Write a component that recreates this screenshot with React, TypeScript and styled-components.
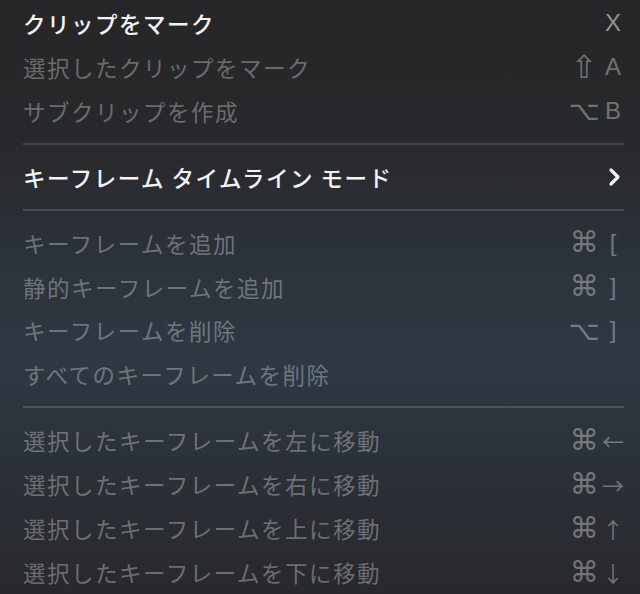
import React from "react";
import styled, { createGlobalStyle } from "styled-components";

const Global = createGlobalStyle`
  html, body { margin: 0; padding: 0; background: #262628; }
  #root { width: 640px; height: 594px; }
`;

const Menu = styled.div`
  width: 640px;
  height: 594px;
  box-sizing: border-box;
  padding: 1px 15px 0 23px;
  display: flex;
  flex-direction: column;
  overflow: hidden;
  background: linear-gradient(
    180deg,
    #262628 0%,
    #28292c 25%,
    #2c333b 45%,
    #2e3944 60%,
    #2b3037 80%,
    #28292c 100%
  );
  font-family: "Noto Sans CJK JP", "Noto Sans", sans-serif;
`;

const Row = styled.div<{ $active?: boolean }>`
  height: 44px;
  display: flex;
  align-items: center;
  justify-content: space-between;
  font-size: 22.5px;
  letter-spacing: 1.5px;
  font-weight: ${(p) => (p.$active ? 500 : 400)};
  color: ${(p) => (p.$active ? "#f3f3f3" : "rgba(255,255,255,0.33)")};
`;

const Label = styled.span`
  white-space: nowrap;
`;

const Shortcut = styled.span<{ $active?: boolean }>`
  display: grid;
  grid-template-columns: 26px 24px;
  column-gap: 4px;
  align-items: center;
  line-height: 1;
  letter-spacing: 0;
  font-weight: 400;
  color: ${(p) => (p.$active ? "rgba(255,255,255,0.5)" : "rgba(255,255,255,0.35)")};
`;

const Mod = styled.span<{ $size: number }>`
  display: flex;
  justify-content: center;
  font-family: "DejaVu Sans", sans-serif;
  font-size: ${(p) => p.$size}px;
`;

const Key = styled.span<{ $arrow?: boolean }>`
  display: flex;
  justify-content: center;
  font-family: ${(p) =>
    p.$arrow ? '"Noto Sans CJK JP", sans-serif' : '"Liberation Sans", "DejaVu Sans", sans-serif'};
  font-size: ${(p) => (p.$arrow ? "22px" : "24px")};
`;

const Separator = styled.div`
  height: 2px;
  margin: 10px 1px 10px 0;
  background: rgba(255, 255, 255, 0.15);
`;

const Chevron = () => (
  <svg width="16" height="20" viewBox="0 0 16 20" style={{ marginRight: 2 }}>
    <polyline
      points="4,3 11,10 4,17"
      fill="none"
      stroke="#f3f3f3"
      strokeWidth="3.2"
      strokeLinecap="round"
      strokeLinejoin="round"
    />
  </svg>
);

type Item = { label: string; mod?: string; key?: string; active?: boolean };

const arrows = "←→↑↓";
const modSize: Record<string, number> = { "⌘": 29, "⌥": 27, "⇧": 32 };

const group1: Item[] = [
  { label: "クリップをマーク", key: "X", active: true },
  { label: "選択したクリップをマーク", mod: "⇧", key: "A" },
  { label: "サブクリップを作成", mod: "⌥", key: "B" },
];

const group3: Item[] = [
  { label: "キーフレームを追加", mod: "⌘", key: "[" },
  { label: "静的キーフレームを追加", mod: "⌘", key: "]" },
  { label: "キーフレームを削除", mod: "⌥", key: "]" },
  { label: "すべてのキーフレームを削除" },
];

const group4: Item[] = [
  { label: "選択したキーフレームを左に移動", mod: "⌘", key: "←" },
  { label: "選択したキーフレームを右に移動", mod: "⌘", key: "→" },
  { label: "選択したキーフレームを上に移動", mod: "⌘", key: "↑" },
  { label: "選択したキーフレームを下に移動", mod: "⌘", key: "↓" },
];

const MenuRow = ({ item }: { item: Item }) => (
  <Row $active={item.active}>
    <Label>{item.label}</Label>
    {item.key && (
      <Shortcut $active={item.active}>
        <Mod $size={item.mod ? modSize[item.mod] : 24}>{item.mod ?? ""}</Mod>
        <Key $arrow={arrows.includes(item.key)}>{item.key}</Key>
      </Shortcut>
    )}
  </Row>
);

export default function App() {
  return (
    <>
      <Global />
      <Menu>
        {group1.map((i) => (
          <MenuRow key={i.label} item={i} />
        ))}
        <Separator />
        <Row $active>
          <Label>キーフレーム タイムライン モード</Label>
          <Chevron />
        </Row>
        <Separator />
        {group3.map((i) => (
          <MenuRow key={i.label} item={i} />
        ))}
        <Separator />
        {group4.map((i) => (
          <MenuRow key={i.label} item={i} />
        ))}
      </Menu>
    </>
  );
}
